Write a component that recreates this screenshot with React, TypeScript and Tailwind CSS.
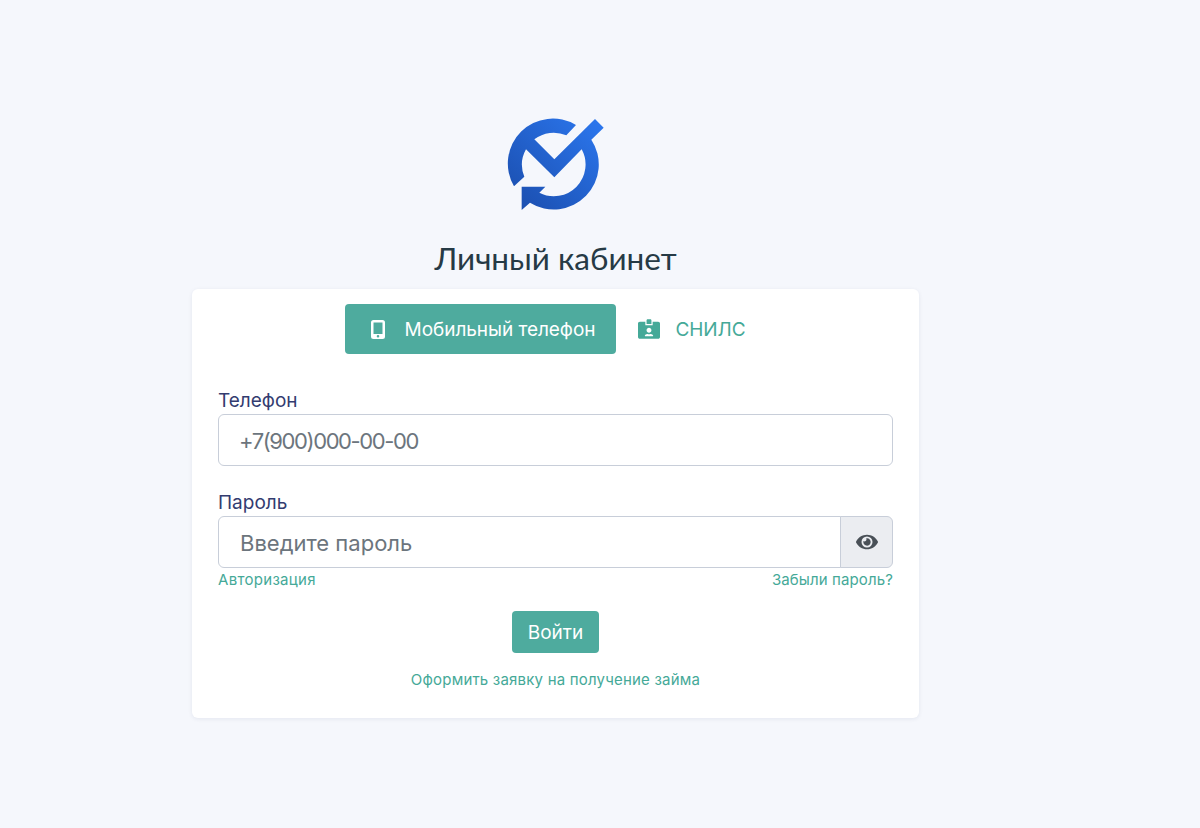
import { FaIdCardAlt, FaEye } from "react-icons/fa";

function Logo() {
  return (
    <svg width="130" height="115" viewBox="0 0 390 345" className="block mx-auto">
      <defs>
        <linearGradient id="lg" x1="1" y1="0" x2="0" y2="1">
          <stop offset="0" stopColor="#2c78f0" />
          <stop offset="1" stopColor="#1a4cab" />
        </linearGradient>
      </defs>
      <path
        fill="url(#lg)"
        d="M69 244A135 135 0 0 1 255 60L226 91A95 95 0 0 0 130 103L190 163L312 42L338 68L301 104A135 135 0 0 1 117 293L92 315L92 245L163 245L145 263A95 95 0 0 0 272 133L190 217L105 133A95 95 0 0 0 100 215Z"
      />
    </svg>
  );
}

function Phone() {
  return (
    <svg width="14" height="19" viewBox="0 0 14 19" className="mr-[20px]">
      <path
        fill="currentColor"
        fillRule="evenodd"
        d="M2.5 0h9A2.5 2.5 0 0 1 14 2.5v14a2.5 2.5 0 0 1-2.5 2.5h-9A2.5 2.5 0 0 1 0 16.500v-14A2.500 2.500 0 0 1 2.500 0ZM2.500 2.500v11.500h9V2.500ZM7 15a1.300 1.300 0 1 0 0 2.600a1.300 1.300 0 0 0 0-2.600Z"
      />
    </svg>
  );
}

export default function App() {
  return (
    <div className="min-h-[828px] bg-[#f5f7fc] pt-[105px] font-['Inter',sans-serif]">
      <div className="w-[727px] ml-[192px]">
        <Logo />
        <h1 className="mt-[14px] h-[55px] text-center text-[31.5px] leading-[48px] text-[#263a45] font-['Lato',sans-serif]">
          Личный кабинет
        </h1>
        <div className="h-[429px] rounded-md bg-white px-[26px] pt-[15px] shadow-[0_1px_4px_rgba(30,40,90,0.08)]">
          <div className="flex justify-center pr-[11px]">
            <button className="flex h-[50px] w-[271px] items-center rounded bg-[#4eab9e] pl-[26px] text-[19px] text-white">
              <Phone />
              <span className="mt-[3px] tracking-[-0.05px]">Мобильный телефон</span>
            </button>
            <button className="flex h-[50px] items-center pl-[22px] pr-[10px] text-[19px] text-[#45a998]">
              <FaIdCardAlt className="mr-[16px] h-[20px] w-[22px]" />
              <span className="mt-[3px] tracking-[-0.1px]">СНИЛС</span>
            </button>
          </div>
          <label className="mt-[33px] block text-[19px] leading-[27px] text-[#333c70]">Телефон</label>
          <div className="flex h-[52px] items-center rounded-md border border-[#c8ced9] pl-[20px] pt-[2px] text-[22px] tracking-[-1.4px] text-[#6c757d]">
            +7(900)000-00-00
          </div>
          <label className="mt-[23px] block text-[19px] leading-[27px] text-[#333c70]">Пароль</label>
          <div className="flex h-[52px]">
            <div className="flex flex-1 items-center rounded-l-md border border-[#c8ced9] pl-[21px] pt-[2px] text-[22px] text-[#6c757d]">
              Введите пароль
            </div>
            <div className="-ml-px flex w-[53px] items-center justify-center rounded-r-md border border-[#c8ced9] bg-[#ebedf1] text-[#495057]">
              <FaEye className="h-[20px] w-[22px]" />
            </div>
          </div>
          <div className="mt-px flex justify-between text-[15px] leading-[21px] text-[#45a998]">
            <a className="tracking-[0.3px]">Авторизация</a>
            <a className="tracking-[0.12px]">Забыли пароль?</a>
          </div>
          <div className="mt-[21px] flex justify-center">
            <button className="h-[42px] w-[87px] rounded bg-[#4eab9e] pt-[3px] text-[19px] text-white">Войти</button>
          </div>
          <div className="mt-[16px] text-center text-[15px] leading-[21px] tracking-[0.2px] text-[#45a998]">
            Оформить заявку на получение займа
          </div>
        </div>
      </div>
    </div>
  );
}
